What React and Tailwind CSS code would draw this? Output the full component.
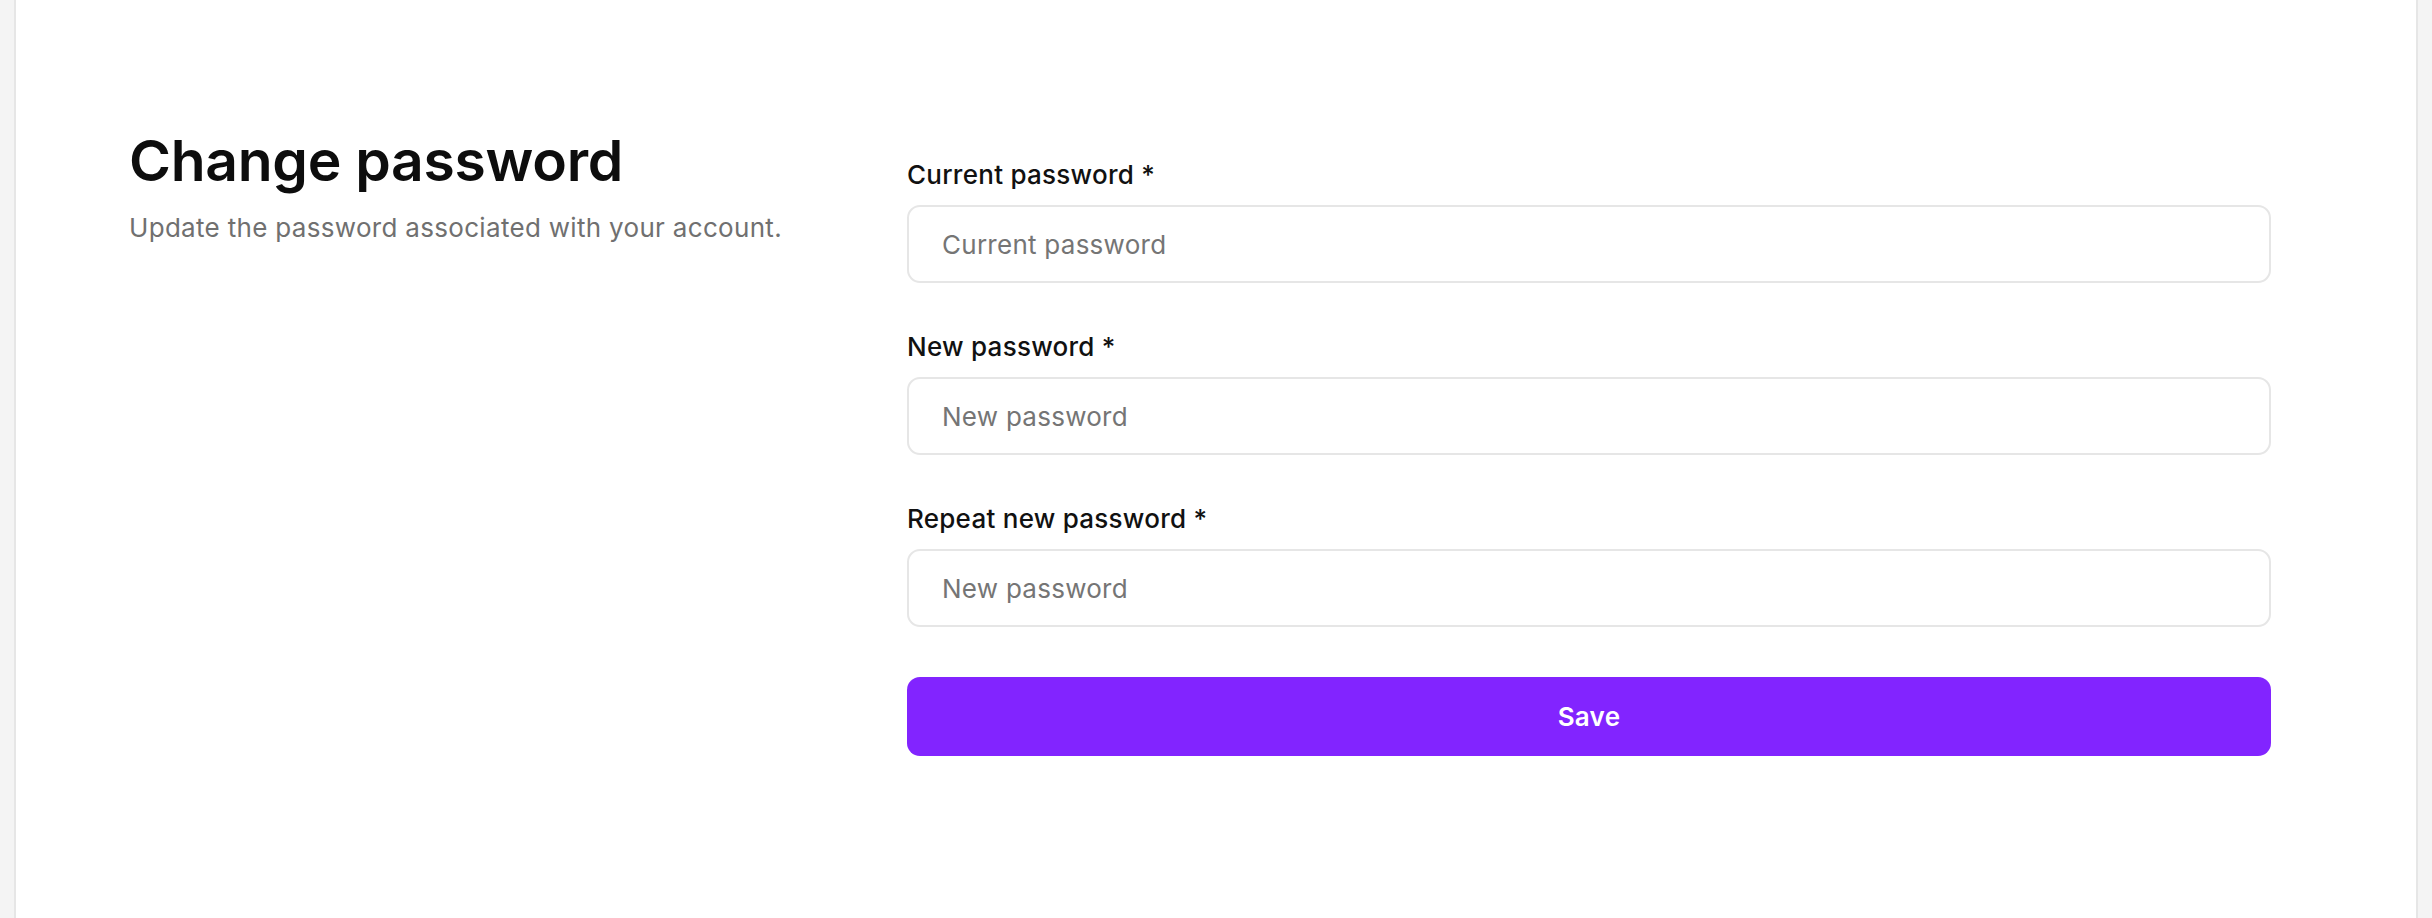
import React from "react";

const fields = [
  { id: "current", label: "Current password *", placeholder: "Current password" },
  { id: "new", label: "New password *", placeholder: "New password" },
  { id: "repeat", label: "Repeat new password *", placeholder: "New password" },
];

export default function App() {
  return (
    <div
      className="min-h-screen bg-[#f4f4f4] px-[14px]"
      style={{ fontFamily: "Inter, 'Noto Sans', sans-serif" }}
    >
      <div className="min-h-screen bg-white border-x-2 border-[#e6e6e6] pl-[113px] pt-[127px]">
        <div className="flex items-start">
          {/* Left: title */}
          <div className="w-[778px] shrink-0">
            <h1 className="text-[57px] leading-[68px] font-semibold text-[#0d0d0d] tracking-[-0.005em]">
              Change password
            </h1>
            <p className="mt-[15px] text-[26px] leading-[36px] text-[#707070] tracking-[0.012em]">
              Update the password associated with your account.
            </p>
          </div>

          {/* Right: form */}
          <form className="w-[1364px] mt-[30px] flex flex-col" onSubmit={(e) => e.preventDefault()}>
            {fields.map((f, i) => (
              <div key={f.id} className={i === 0 ? "" : "mt-[46px]"}>
                <label
                  htmlFor={f.id}
                  className="block text-[26px] leading-[36px] font-medium text-[#111111] tracking-[0.01em]"
                >
                  {f.label}
                </label>
                <input
                  id={f.id}
                  type="password"
                  placeholder={f.placeholder}
                  className="mt-[12px] block w-full h-[78px] rounded-[13px] border-2 border-[#e6e6e6] bg-white px-[33px] text-[26px] tracking-[0.01em] text-[#111111] placeholder:text-[#757575] outline-none"
                />
              </div>
            ))}
            <button
              type="submit"
              className="mt-[50px] h-[79px] w-full rounded-[13px] bg-[#8224ff] text-[26px] font-semibold text-white tracking-[0.01em]"
            >
              Save
            </button>
          </form>
        </div>
      </div>
    </div>
  );
}
